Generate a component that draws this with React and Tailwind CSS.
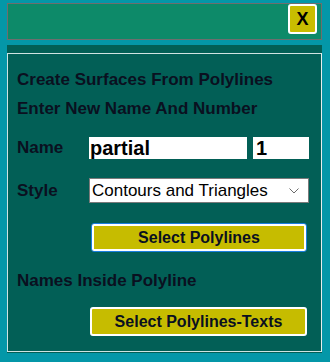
export default function App() {
  const font = { fontFamily: '"Liberation Sans", Arial, sans-serif' };
  return (
    <div className="w-[330px] h-[362px] bg-[#0497a8] flex flex-col pt-[3px] px-[7px]" style={font}>
      <div className="h-[37px] w-[315px] border border-[#6e6e6e] bg-[#0d8a69] flex justify-end items-start pr-[4px]">
        <div className="mt-0 w-[29px] h-[30px] rounded-[3px] border-2 border-white bg-[#c8bd00] flex items-center justify-center text-[18px] font-bold text-black leading-none">
          X
        </div>
      </div>
      <div className="mt-[5px] w-[315px] h-[308px] bg-[#025f56] pt-[8px] pb-[1px] flex flex-col">
        <div className="flex-1 border border-[#cfe3e2] border-r-[#e8eeee] flex flex-col pl-[9px] pt-[16px] text-[#0a1020] font-bold text-[17px]">
          <div className="h-[20px] leading-[20px]">Create Surfaces From Polylines</div>
          <div className="h-[20px] leading-[20px] mt-[9px]">Enter New Name And Number</div>
          <div className="mt-[18px] h-[22px] flex items-center">
            <div className="w-[72px] leading-[20px]">Name</div>
            <div className="w-[158px] h-[22px] bg-white text-black text-[20px] leading-[22px] pl-[1px]">partial</div>
            <div className="ml-[6px] w-[56px] h-[22px] bg-white text-black text-[20px] leading-[22px] pl-[3px]">1</div>
          </div>
          <div className="mt-[19px] h-[25px] flex items-center">
            <div className="w-[72px] leading-[20px]">Style</div>
            <div className="w-[220px] h-[25px] bg-white border border-[#7a7a7a] flex items-center justify-between pl-[2px] pr-[9px]">
              <span className="text-black font-normal text-[17px] leading-none">Contours and Triangles</span>
              <svg width="10" height="6" viewBox="0 0 10 6" fill="none" stroke="#6b6b6b" strokeWidth="1">
                <path d="M0.5 0.5 L5 5 L9.5 0.5" />
              </svg>
            </div>
          </div>
          <div className="mt-[20px] flex">
            <div className="ml-[74px] w-[216px] h-[29px] rounded-[3px] border border-[#1a7fe0] p-0">
              <div className="w-full h-full rounded-[2px] border-2 border-white bg-[#c6bc00] flex items-center justify-center text-[16px] text-[#0a1020] leading-none">
                Select Polylines
              </div>
            </div>
          </div>
          <div className="mt-[19px] h-[20px] leading-[20px]">Names Inside Polyline</div>
          <div className="mt-[16px] flex">
            <div className="ml-[73px] w-[217px] h-[29px] rounded-[3px] border-2 border-white bg-[#c6bc00] flex items-center justify-center text-[16px] text-[#0a1020] leading-none">
              Select Polylines-Texts
            </div>
          </div>
        </div>
      </div>
    </div>
  );
}
